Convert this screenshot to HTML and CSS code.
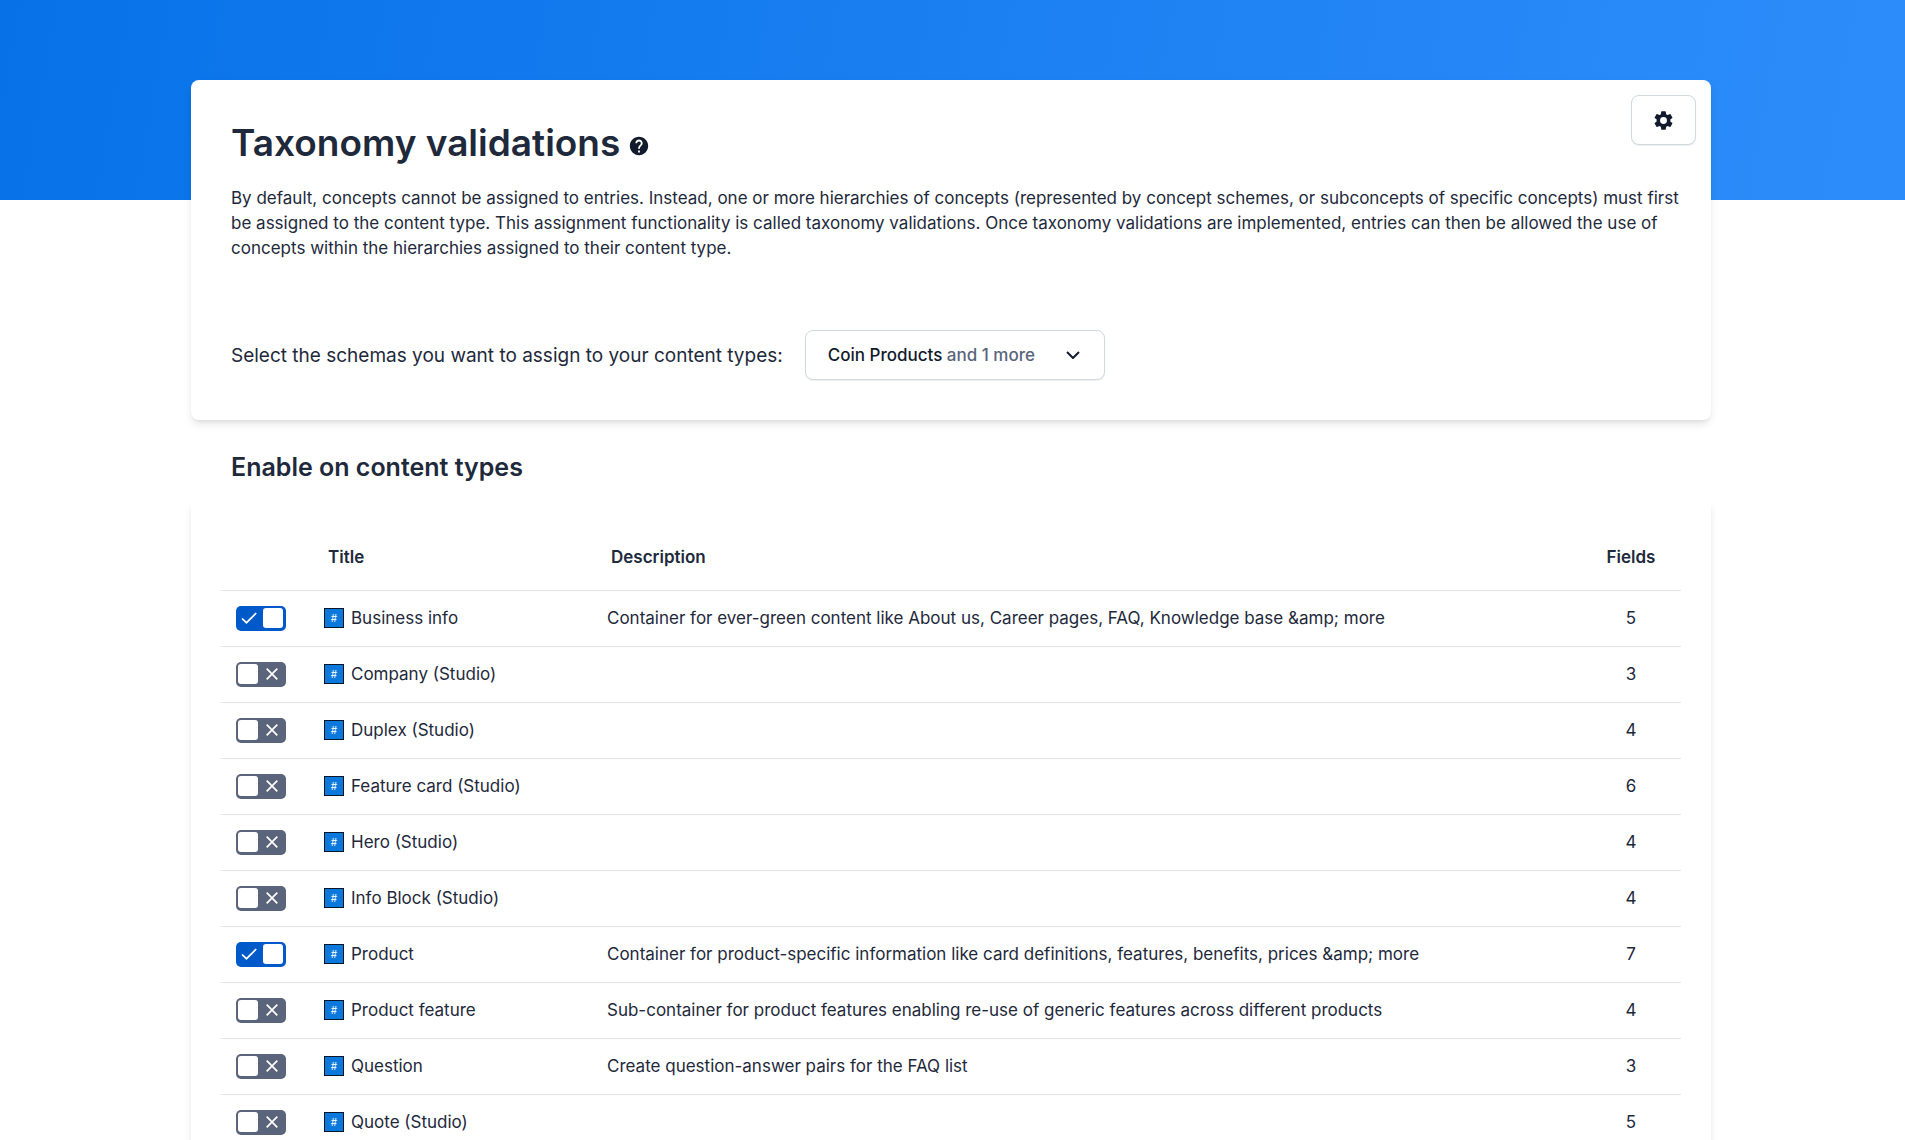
FILE: index.html
```html
<!DOCTYPE html>
<html lang="en">
<head>
<meta charset="utf-8">
<meta name="viewport" content="width=device-width, initial-scale=1">
<title>Taxonomy validations</title>
<link rel="stylesheet" href="styles.css">
</head>
<body>
<svg class="sprite" aria-hidden="true">
  <symbol id="check" viewBox="0 0 16 12"><path d="M1 6.500 5.500 10.700 15.200 1" fill="none" stroke="currentColor" stroke-width="1.7"/></symbol>
  <symbol id="cross" viewBox="0 0 12 12"><path d="M.7.7l10.6 10.6M11.3.7.7 11.3" fill="none" stroke="currentColor" stroke-width="1.7"/></symbol>
</svg>
<main class="page">
  <section class="card intro">
    <button class="button settings" type="button" aria-label="Settings">
      <svg width="24" height="24" viewBox="0 0 24 24" fill="currentColor" aria-hidden="true"><path d="M19.14 12.94c.04-.3.06-.61.06-.94 0-.32-.02-.64-.07-.94l2.03-1.58a.49.49 0 0 0 .12-.61l-1.92-3.32a.488.488 0 0 0-.59-.22l-2.39.96c-.5-.38-1.03-.7-1.62-.94l-.36-2.54a.484.484 0 0 0-.48-.41h-3.84c-.24 0-.43.17-.47.41l-.36 2.54c-.59.24-1.13.57-1.62.94l-2.39-.96c-.22-.08-.47 0-.59.22L2.74 8.87c-.12.21-.08.47.12.61l2.03 1.58c-.05.3-.09.63-.09.94s.02.64.07.94l-2.03 1.58a.49.49 0 0 0-.12.61l1.92 3.32c.12.22.37.29.59.22l2.39-.96c.5.38 1.03.7 1.62.94l.36 2.54c.05.24.24.41.48.41h3.84c.24 0 .44-.17.47-.41l.36-2.54c.59-.24 1.13-.56 1.62-.94l2.39.96c.22.08.47 0 .59-.22l1.92-3.32c.12-.22.07-.47-.12-.61zM12 15.6A3.6 3.6 0 1 1 12 8.400a3.6 3.6 0 0 1 0 7.200z"/></svg>
    </button>
    <div class="heading">
      <h1>Taxonomy validations</h1>
      <svg class="help" width="22" height="22" viewBox="0 0 24 24" fill="currentColor" role="img" aria-label="Help"><path d="M12 2C6.480 2 2 6.480 2 12s4.480 10 10 10 10-4.480 10-10S17.520 2 12 2zm1 17h-2v-2h2v2zm2.070-7.750-.9.920C13.450 12.900 13 13.500 13 15h-2v-.5c0-1.100.450-2.100 1.170-2.830l1.240-1.260c.370-.360.590-.860.590-1.410 0-1.100-.9-2-2-2s-2 .9-2 2H8c0-2.210 1.790-4 4-4s4 1.790 4 4c0 .880-.360 1.680-.930 2.250z"/></svg>
    </div>
    <p class="lead">By default, concepts cannot be assigned to entries. Instead, one or more hierarchies of concepts (represented by concept schemes, or subconcepts of specific concepts) must first be assigned to the content type. This assignment functionality is called taxonomy validations. Once taxonomy validations are implemented, entries can then be allowed the use of concepts within the hierarchies assigned to their content type.</p>
    <div class="schemas">
      <span id="schemas-label">Select the schemas you want to assign to your content types:</span>
      <button class="button dropdown" type="button" aria-haspopup="listbox" aria-labelledby="schemas-label schemas-value">
        <span id="schemas-value">Coin Products <span class="muted">and 1 more</span></span>
        <svg width="14" height="8" viewBox="0 0 14 8" fill="none" stroke="currentColor" stroke-width="2" aria-hidden="true"><path d="M1 1l6 6 6-6"/></svg>
      </button>
    </div>
  </section>
  <h2>Enable on content types</h2>
  <section class="card types">
    <table>
      <colgroup><col class="col-toggle"><col class="col-title"><col><col class="col-fields"></colgroup>
      <thead>
        <tr><td></td><th scope="col">Title</th><th scope="col">Description</th><th scope="col" class="fields">Fields</th></tr>
      </thead>
      <tbody>
        <tr>
          <td><label class="toggle"><input type="checkbox" aria-label="Business info" checked><svg class="on"><use href="#check"/></svg><svg class="off"><use href="#cross"/></svg></label></td>
          <td><span class="name"><span class="hash">#</span>Business info</span></td>
          <td>Container for ever-green content like About us, Career pages, FAQ, Knowledge base &amp;amp; more</td>
          <td class="fields">5</td>
        </tr>
        <tr>
          <td><label class="toggle"><input type="checkbox" aria-label="Company (Studio)"><svg class="on"><use href="#check"/></svg><svg class="off"><use href="#cross"/></svg></label></td>
          <td><span class="name"><span class="hash">#</span>Company (Studio)</span></td>
          <td></td>
          <td class="fields">3</td>
        </tr>
        <tr>
          <td><label class="toggle"><input type="checkbox" aria-label="Duplex (Studio)"><svg class="on"><use href="#check"/></svg><svg class="off"><use href="#cross"/></svg></label></td>
          <td><span class="name"><span class="hash">#</span>Duplex (Studio)</span></td>
          <td></td>
          <td class="fields">4</td>
        </tr>
        <tr>
          <td><label class="toggle"><input type="checkbox" aria-label="Feature card (Studio)"><svg class="on"><use href="#check"/></svg><svg class="off"><use href="#cross"/></svg></label></td>
          <td><span class="name"><span class="hash">#</span>Feature card (Studio)</span></td>
          <td></td>
          <td class="fields">6</td>
        </tr>
        <tr>
          <td><label class="toggle"><input type="checkbox" aria-label="Hero (Studio)"><svg class="on"><use href="#check"/></svg><svg class="off"><use href="#cross"/></svg></label></td>
          <td><span class="name"><span class="hash">#</span>Hero (Studio)</span></td>
          <td></td>
          <td class="fields">4</td>
        </tr>
        <tr>
          <td><label class="toggle"><input type="checkbox" aria-label="Info Block (Studio)"><svg class="on"><use href="#check"/></svg><svg class="off"><use href="#cross"/></svg></label></td>
          <td><span class="name"><span class="hash">#</span>Info Block (Studio)</span></td>
          <td></td>
          <td class="fields">4</td>
        </tr>
        <tr>
          <td><label class="toggle"><input type="checkbox" aria-label="Product" checked><svg class="on"><use href="#check"/></svg><svg class="off"><use href="#cross"/></svg></label></td>
          <td><span class="name"><span class="hash">#</span>Product</span></td>
          <td>Container for product-specific information like card definitions, features, benefits, prices &amp;amp; more</td>
          <td class="fields">7</td>
        </tr>
        <tr>
          <td><label class="toggle"><input type="checkbox" aria-label="Product feature"><svg class="on"><use href="#check"/></svg><svg class="off"><use href="#cross"/></svg></label></td>
          <td><span class="name"><span class="hash">#</span>Product feature</span></td>
          <td>Sub-container for product features enabling re-use of generic features across different products</td>
          <td class="fields">4</td>
        </tr>
        <tr>
          <td><label class="toggle"><input type="checkbox" aria-label="Question"><svg class="on"><use href="#check"/></svg><svg class="off"><use href="#cross"/></svg></label></td>
          <td><span class="name"><span class="hash">#</span>Question</span></td>
          <td>Create question-answer pairs for the FAQ list</td>
          <td class="fields">3</td>
        </tr>
        <tr>
          <td><label class="toggle"><input type="checkbox" aria-label="Quote (Studio)"><svg class="on"><use href="#check"/></svg><svg class="off"><use href="#cross"/></svg></label></td>
          <td><span class="name"><span class="hash">#</span>Quote (Studio)</span></td>
          <td></td>
          <td class="fields">5</td>
        </tr>
      </tbody>
    </table>
  </section>
</main>
</body>
</html>
```
FILE: styles.css
```css
* {
  box-sizing: border-box;
}

body {
  margin: 0;
  background: #fff linear-gradient(100deg, #0772e8, #2889f8 85%, #2c8cfa) no-repeat top / 100% 200px;
  color: #1e293b;
  font: 17px/25px Inter, "Liberation Sans", sans-serif;
}

.sprite {
  display: none;
}

.page {
  padding: 80px 194px 0 191px;
}

.card {
  background: #fff;
  box-shadow: 0 5px 8px -1px rgba(0, 0, 0, 0.1), 0 3px 5px -3px rgba(0, 0, 0, 0.1);
}

.intro {
  position: relative;
  border-radius: 8px;
  padding: 40px 20px 40px 40px;
}

.heading {
  display: flex;
  align-items: center;
  gap: 8px;
}

h1 {
  margin: 0;
  font-size: 37px;
  line-height: 46px;
  font-weight: 600;
}

.help {
  color: #111b2b;
  margin-top: 6px;
}

.lead {
  margin: 20px 0 69px;
}

.button {
  display: flex;
  align-items: center;
  justify-content: center;
  height: 50px;
  border: 1px solid #cfd9e0;
  border-radius: 8px;
  background: #fff;
  box-shadow: 0 1px 1px rgba(25, 37, 50, 0.08);
  color: #111b2b;
  font: 500 17px/25px Inter, "Liberation Sans", sans-serif;
}

.settings {
  position: absolute;
  top: 15px;
  right: 15px;
  width: 65px;
  padding: 0;
}

.settings svg {
  width: 23px;
  height: 23px;
}

.schemas {
  display: flex;
  align-items: center;
  gap: 22px;
  font-size: 19px;
}

.dropdown {
  width: 300px;
  padding: 0 24px 0 22px;
  justify-content: space-between;
}

.muted {
  color: #5a657c;
}

h2 {
  margin: 30px 40px 16px;
  font-size: 25px;
  line-height: 35px;
  font-weight: 600;
}

.types {
  padding: 25px 30px;
}

table {
  width: 100%;
  table-layout: fixed;
  border-collapse: collapse;
}

.col-toggle {
  width: 88px;
}

.col-title {
  width: 283px;
}

.col-fields {
  width: 100px;
}

th,
td {
  height: 56px;
  padding: 0 15px;
  border-bottom: 1px solid #e2e4e9;
  text-align: left;
  vertical-align: middle;
}

th {
  height: 64px;
  padding: 0 19px;
  font-weight: 600;
}

th.fields,
td.fields {
  padding: 0;
  text-align: center;
}

.name {
  display: flex;
  align-items: center;
  gap: 7px;
}

.hash {
  width: 20px;
  height: 20px;
  border: 1px solid #0c1626;
  background: #0b79dc;
  color: #fff;
  font-size: 10px;
  line-height: 18px;
  text-align: center;
}

.toggle {
  display: grid;
  grid-template-columns: 25px 25px;
  align-items: center;
  justify-items: center;
  width: 50px;
  height: 25px;
  color: #fff;
}

.toggle input {
  grid-area: 1 / 1 / 2 / 3;
  display: flex;
  align-items: center;
  appearance: none;
  width: 50px;
  height: 25px;
  margin: 0;
  padding: 2px;
  border-radius: 5px;
  background: #5a657c;
}

.toggle input::before {
  content: "";
  width: 20px;
  height: 20px;
  border-radius: 3px;
  background: #fff;
}

.toggle input:checked {
  justify-content: flex-end;
  padding-right: 3px;
  background: #0059c8;
}

.toggle svg {
  pointer-events: none;
}

.on {
  grid-area: 1 / 1;
  display: none;
  width: 16px;
  height: 12px;
}

.off {
  grid-area: 1 / 2;
  width: 12px;
  height: 12px;
  margin-right: 4px;
}

.toggle input:checked ~ .on {
  display: block;
}

.toggle input:checked ~ .off {
  display: none;
}
```
